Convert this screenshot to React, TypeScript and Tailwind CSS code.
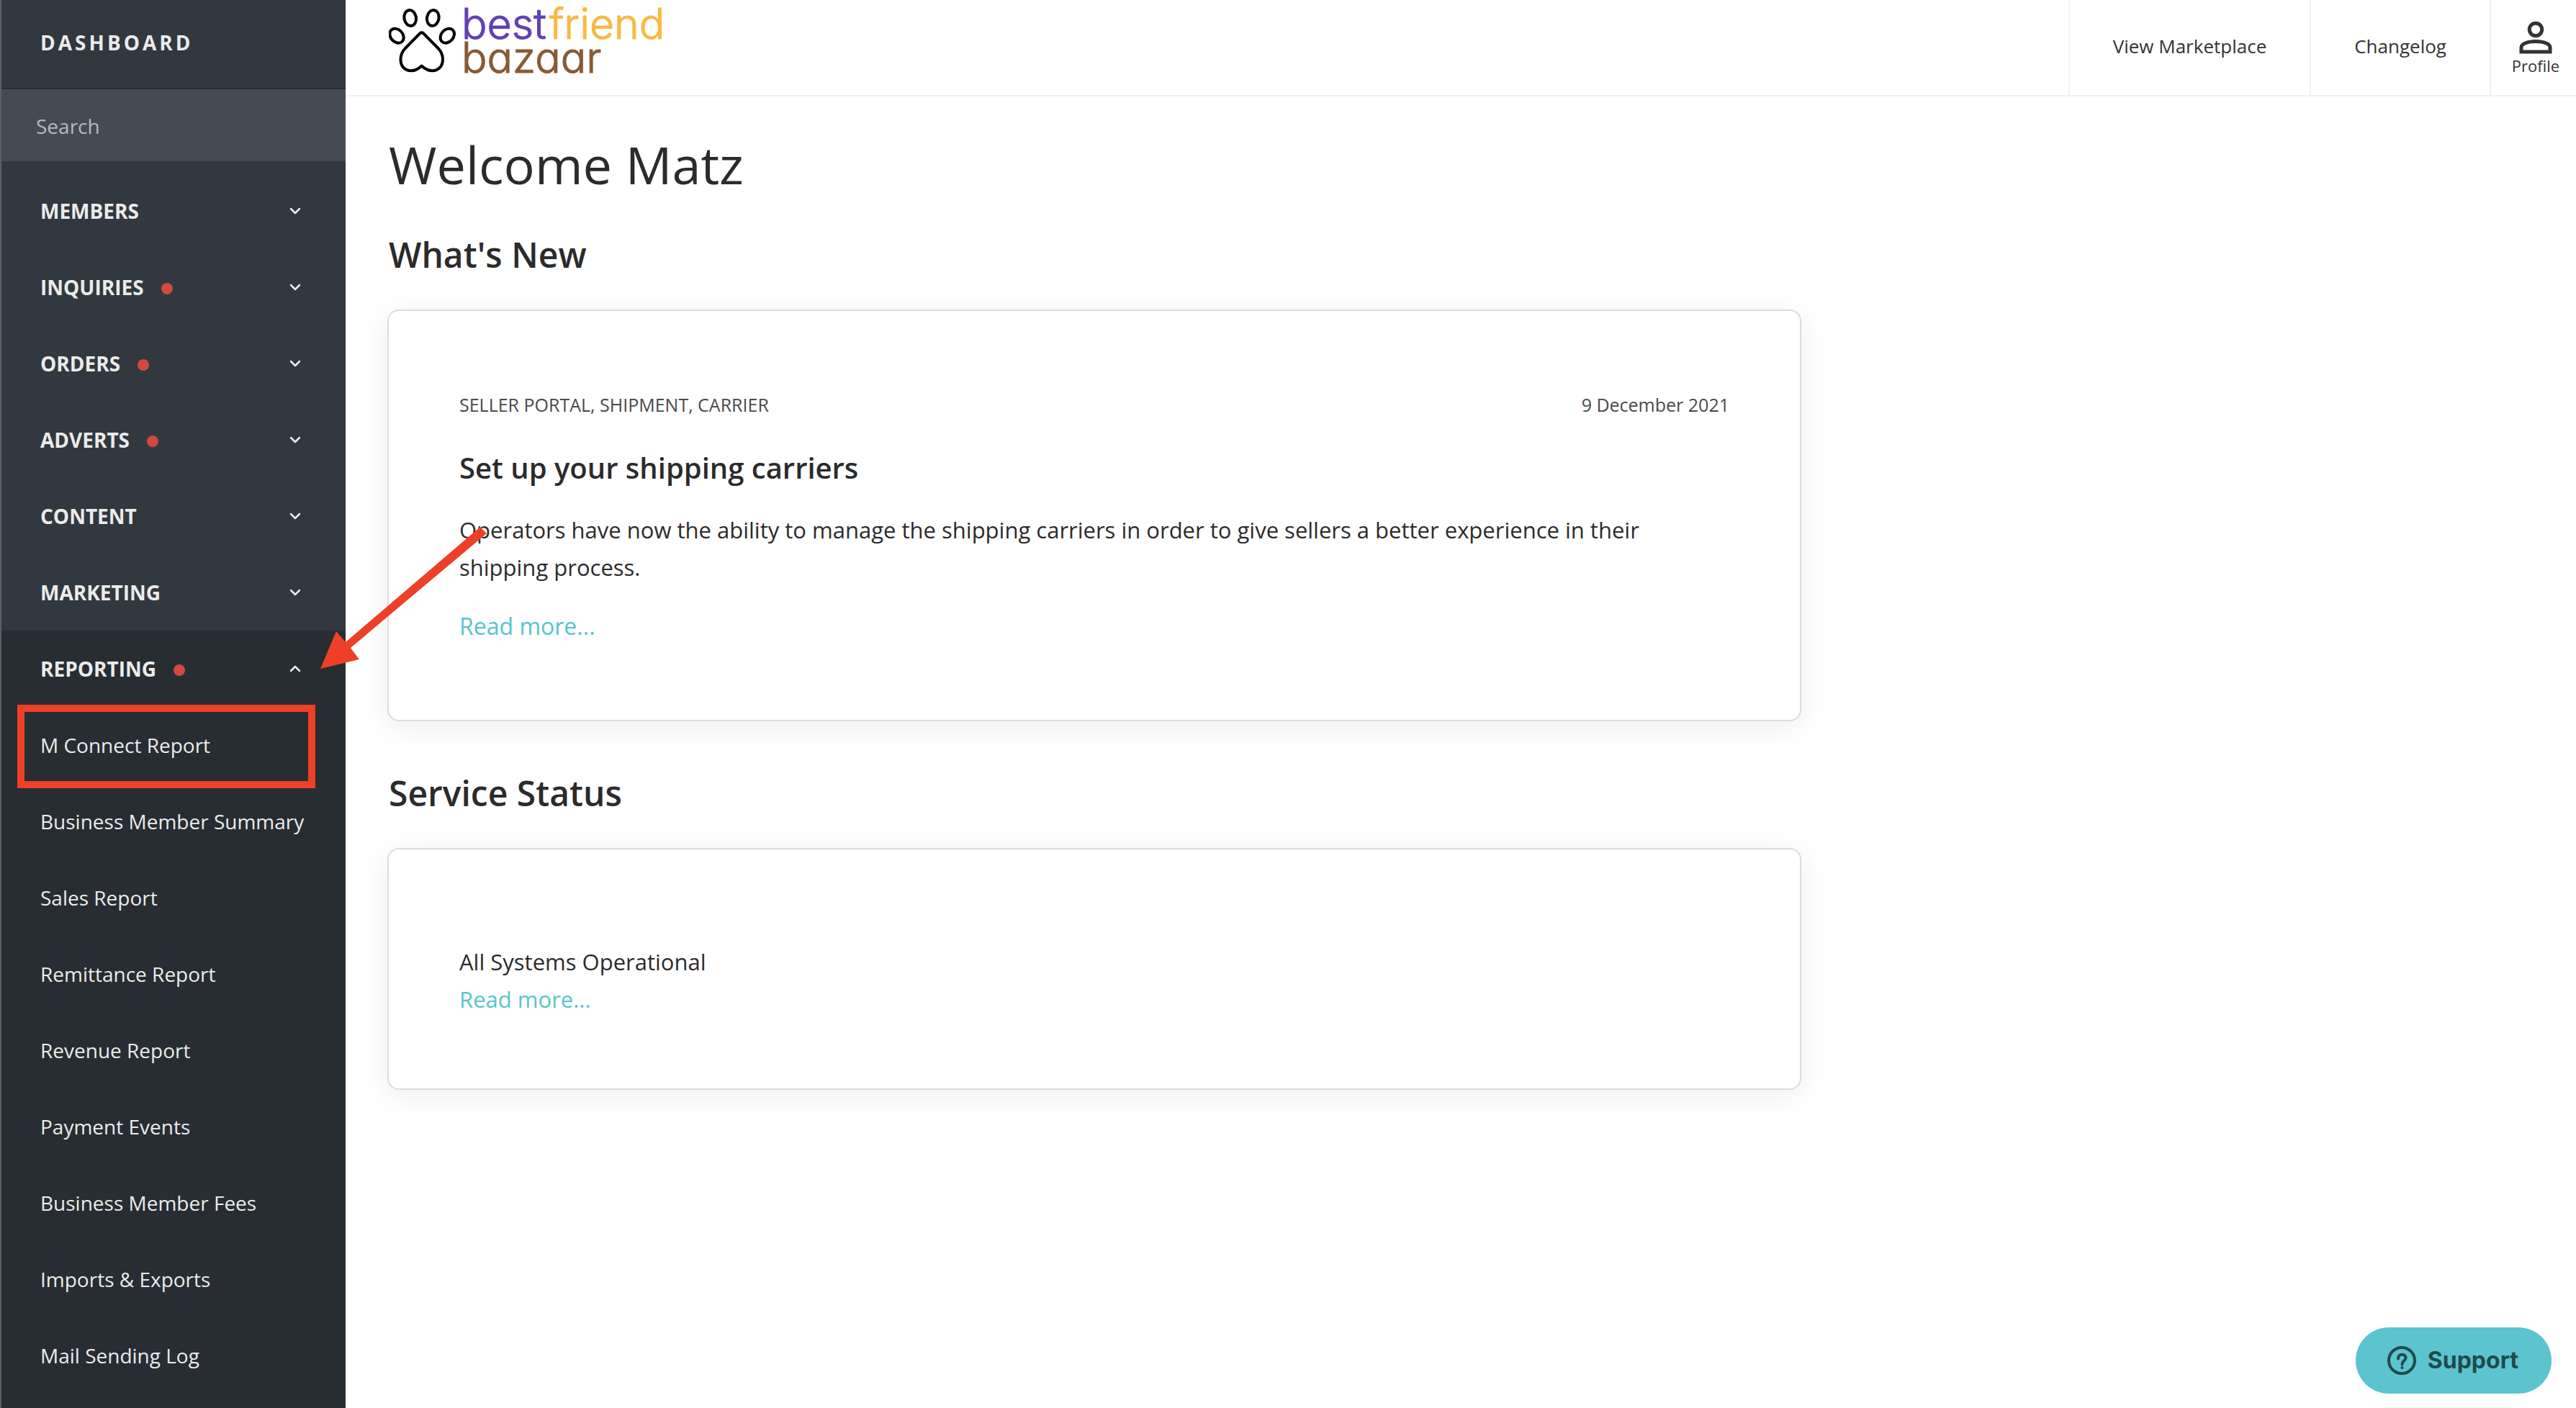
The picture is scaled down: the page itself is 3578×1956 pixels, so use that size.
import { useState } from "react";
import { ChevronDown, ChevronUp } from "lucide-react";

type Section = { label: string; alert?: boolean };

const sections: Section[] = [
  { label: "Members" },
  { label: "Inquiries", alert: true },
  { label: "Orders", alert: true },
  { label: "Adverts", alert: true },
  { label: "Content" },
  { label: "Marketing" },
];

const reports = [
  "M Connect Report",
  "Business Member Summary",
  "Sales Report",
  "Remittance Report",
  "Revenue Report",
  "Payment Events",
  "Business Member Fees",
  "Imports & Exports",
  "Mail Sending Log",
];

const SectionButton = ({ label, alert, open = false }: Section & { open?: boolean }) => {
  const Chevron = open ? ChevronUp : ChevronDown;
  return (
    <button
      type="button"
      aria-expanded={open}
      className="flex h-[106px] w-full items-center pl-[54px] pr-[58px] text-[28px] font-bold uppercase"
    >
      {label}
      {alert && <span className="ml-6 mt-1 size-4 rounded-full bg-[#d2493f]" />}
      <Chevron className="ml-auto size-6" strokeWidth={2.5} />
    </button>
  );
};

const Sidebar = () => {
  const [query, setQuery] = useState("");
  return (
    <aside className="flex w-[480px] shrink-0 flex-col border-l-2 border-[#5b6066] bg-[#31383f] text-[#ebebeb]">
      <div className="flex h-[124px] items-center border-b-2 border-[#272d32] pb-1 pl-[54px] text-[28px] font-bold tracking-[4px]">
        DASHBOARD
      </div>
      <input
        type="search"
        aria-label="Search"
        placeholder="Search"
        value={query}
        onChange={(e) => setQuery(e.target.value)}
        className="h-[100px] w-full bg-[#454b52] px-12 pt-0.5 text-[28px] outline-none placeholder:text-[#b5babf]"
      />
      <nav className="flex grow flex-col pt-4">
        {sections.map((s) => (
          <SectionButton key={s.label} {...s} />
        ))}
        <div className="grow bg-[#272d32]">
          <SectionButton label="Reporting" alert open />
          <ul>
            {reports.map((report, i) => (
              <li key={report} className="relative">
                <a href="#" className="flex h-[106px] items-center whitespace-nowrap pl-[54px] text-[28px]">
                  {report}
                </a>
                {i === 0 && (
                  <span className="pointer-events-none absolute -top-[3px] left-[22px] h-[116px] w-[414px] border-10 border-[#ed4027]" />
                )}
              </li>
            ))}
          </ul>
        </div>
      </nav>
    </aside>
  );
};

const Logo = () => (
  <svg viewBox="0 0 390 120" className="h-[120px] w-[390px]" role="img" aria-label="bestfriend bazaar">
    <g fill="none" stroke="#000" strokeWidth="4" strokeLinejoin="round">
      <ellipse cx="29.700" cy="25" rx="8.300" ry="11" transform="rotate(-10 29.700 25)" />
      <ellipse cx="61.300" cy="25" rx="8.300" ry="11" transform="rotate(10 61.300 25)" />
      <ellipse cx="11" cy="49.700" rx="8.500" ry="11" transform="rotate(-42 11 49.700)" />
      <ellipse cx="81.300" cy="49.700" rx="8.500" ry="11" transform="rotate(42 81.300 49.700)" />
      <path d="M43.500 46.200Q45.700 44.500 47.900 46.200L69 67.500C74 73 75 77 75 82.500C75 92 69 98.300 60.500 98.300C54 98.300 50 95.500 45.700 91.500C41.400 95.500 37.400 98.300 31 98.300C22 98.300 16.500 92 16.500 82.500C16.500 77 17.500 73 22.500 67.500Z" />
    </g>
    <g
      className="font-['Inter',sans-serif] text-[59px] font-light [font-feature-settings:'cv11']"
      strokeLinejoin="round"
    >
      <text x="101" y="54" fill="#6140b4" stroke="#6140b4">
        best
      </text>
      <text x="223" y="54" fill="#f9b942" stroke="#f9b942">
        friend
      </text>
      <text x="101" y="101" fill="#875a34" stroke="#875a34">
        bazaar
      </text>
    </g>
  </svg>
);

const Header = () => (
  <header className="flex h-[134px] border-b-2 border-[#f1f1f1] pl-[60px] text-[26px] text-[#333]">
    <Logo />
    <nav className="ml-auto flex">
      <a href="#" className="flex items-center border-l-2 border-[#f1f1f1] px-[60px] pb-1">
        View Marketplace
      </a>
      <a href="#" className="flex items-center border-l-2 border-[#f1f1f1] px-[60px] pb-1">
        Changelog
      </a>
      <button type="button" className="flex w-[120px] flex-col items-center border-l-2 border-[#f1f1f1] pl-1.5 pt-7">
        <svg viewBox="0 0 48 48" className="size-12" fill="none" stroke="#333" strokeWidth="5">
          <circle cx="24" cy="13" r="8.700" />
          <path d="M4 44V37.500C4 33.500 12 29.500 24 29.500S44 33.500 44 37.500V44Z" />
        </svg>
        <span className="text-[22px] leading-[30px]">Profile</span>
      </button>
    </nav>
  </header>
);

const cardStyle =
  "-mx-0.5 rounded-2xl border-2 border-[#dcdcdc] bg-white px-[98px] shadow-[0_8px_40px_rgba(0,0,0,0.07)]";

const Main = () => (
  <main className="max-w-[2080px] px-[60px] pt-[46px] text-[31px] leading-[52px] text-[#2b2b2b]">
    <h1 className="text-[72px] leading-[96px]">Welcome Matz</h1>
    <h2 className="mt-[46px] text-[48px] font-semibold leading-[64px]">What's New</h2>
    <article className={`mt-11 pb-[104px] pt-[108px] ${cardStyle}`}>
      <div className="flex justify-between text-[25px] leading-[44px] text-[#4a4a4a]">
        <span>SELLER PORTAL, SHIPMENT, CARRIER</span>
        <time dateTime="2021-12-09">9 December 2021</time>
      </div>
      <h3 className="mt-10 text-[40px] font-semibold">Set up your shipping carriers</h3>
      <p className="mt-[34px] max-w-[1720px]">
        Operators have now the ability to manage the shipping carriers in order to give sellers a better experience in
        their shipping process.
      </p>
      <a href="#" className="mt-[30px] block text-[32px] text-[#59c4cf]">
        Read more...
      </a>
    </article>
    <h2 className="mt-[68px] text-[48px] font-semibold leading-[64px]">Service Status</h2>
    <section className={`mt-11 pb-[98px] pt-[130px] ${cardStyle}`}>
      <p>All Systems Operational</p>
      <a href="#" className="block text-[#59c4cf]">
        Read more...
      </a>
    </section>
  </main>
);

const SupportButton = () => (
  <button
    type="button"
    className="fixed bottom-5 right-[34px] flex h-[92px] items-center gap-4 rounded-full bg-[#5bc4cf] pl-11 pr-[46px] font-['Inter',sans-serif] text-[32px] font-bold text-[#22494c]"
  >
    <svg viewBox="0 0 40 40" className="size-10" fill="none" stroke="currentColor" strokeWidth="4">
      <circle cx="20" cy="20" r="18" />
      <path d="M15 17.500V17C15 10 25.500 10 25.500 16.500C25.500 20.500 20.500 20.500 20.500 25V25.500" strokeLinecap="round" />
      <circle cx="20.500" cy="30" r="2" fill="currentColor" stroke="none" />
    </svg>
    Support
  </button>
);

// Pointer from the news card to the open Reporting section
const Arrow = () => (
  <svg viewBox="0 0 232 198" className="pointer-events-none absolute left-[445px] top-[732px] h-[198px] w-[232px] fill-[#ed4027]">
    <path d="M0 197L22 145L35 160L222 0L231 9L42 168L54 184Z" />
  </svg>
);

export default function App() {
  return (
    <div className="relative flex min-h-screen overflow-hidden bg-white font-['Open_Sans',sans-serif]">
      <Sidebar />
      <div className="min-w-0 grow">
        <Header />
        <Main />
      </div>
      <Arrow />
      <SupportButton />
    </div>
  );
}
